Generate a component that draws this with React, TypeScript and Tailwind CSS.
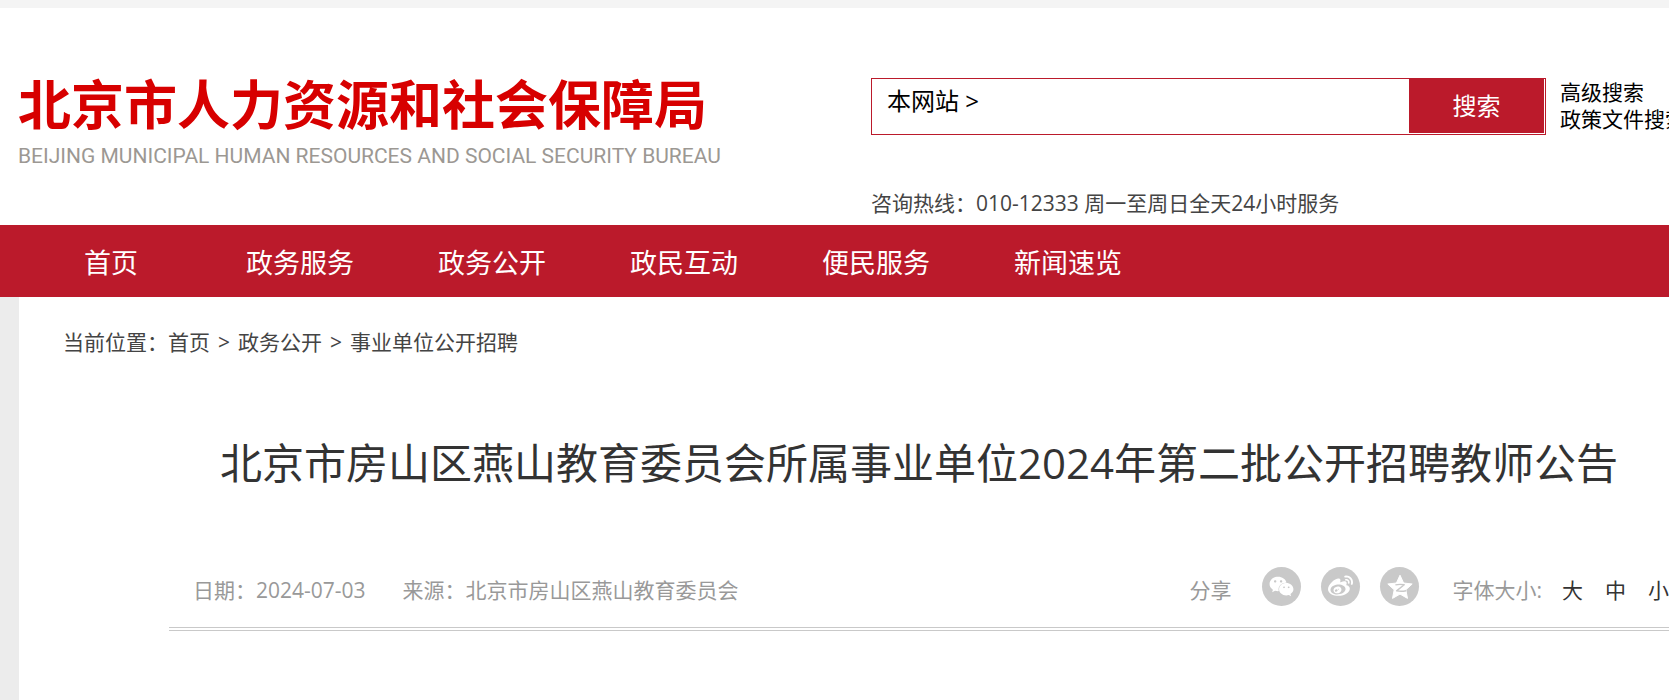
import { FaWeibo, FaWeixin } from "react-icons/fa";

const NAV = ["政务服务", "政务公开", "政民互动", "便民服务", "新闻速览"];

function QzoneIcon() {
  return (
    <svg viewBox="0 0 28 28" className="size-7" aria-hidden>
      <path
        fill="#fff"
        stroke="#fff"
        strokeWidth="1"
        strokeLinejoin="round"
        d="M14 2.2l3.6 7.8 8.6 1-6.4 5.8 1.7 8.6L14 21.1l-7.5 4.3 1.7-8.6L1.8 11l8.6-1z"
      />
      <path
        fill="none"
        stroke="#c9c9c9"
        strokeWidth="1.4"
        strokeLinejoin="round"
        d="M9.4 11.9c3-.7 6-.7 8.8-.1l-7.6 6.1c3.6.6 6.6.5 9.4-.2"
      />
    </svg>
  );
}

function Header() {
  return (
    <header className="flex pt-[70px]">
      <a href="#" className="w-[871px] shrink-0 whitespace-nowrap pl-[18px]">
        <span className="block text-[53px] leading-[54px] font-bold text-[#d70000]">
          北京市人力资源和社会保障局
        </span>
        <span className="mt-3 block font-[Roboto,sans-serif] text-[21px] leading-6 text-[#9c9893]">
          BEIJING MUNICIPAL HUMAN RESOURCES AND SOCIAL SECURITY BUREAU
        </span>
      </a>

      <div className="min-w-0 flex-1">
        <div className="flex">
          <form
            className="flex h-[57px] min-w-0 flex-1 border border-[#bb1a2b] pr-px pb-px"
            onSubmit={(e) => e.preventDefault()}
          >
            <button type="button" className="self-start pl-[15px] pt-1 text-2xl leading-9 text-black">
              本网站 &gt;
            </button>
            <input
              type="text"
              aria-label="搜索内容"
              className="min-w-0 flex-1 px-3 text-2xl outline-none"
            />
            <button type="submit" className="w-[135px] bg-[#bb1a2b] text-2xl text-white">
              搜索
            </button>
          </form>
          <div className="w-[123px] shrink-0 overflow-hidden whitespace-nowrap pl-[14px] pt-px text-[21px] leading-[27px] text-black">
            <a href="#" className="block">高级搜索</a>
            <a href="#" className="block">政策文件搜索</a>
          </div>
        </div>
        <p className="mt-[54px] pb-[7px] text-[21px] leading-[29px] text-[#444]">
          咨询热线：010-12333 周一至周日全天24小时服务
        </p>
      </div>
    </header>
  );
}

function MainNav() {
  return (
    <nav className="flex h-[72px] items-center overflow-hidden whitespace-nowrap bg-[#bb1a2b] pt-[3px] text-[27px] leading-9 text-white">
      <a href="#" className="w-[222px] shrink-0 text-center">首页</a>
      <ul className="flex pl-1">
        {NAV.map((name) => (
          <li key={name} className="w-48 shrink-0 pl-5">
            <a href="#">{name}</a>
          </li>
        ))}
      </ul>
    </nav>
  );
}

function Breadcrumb() {
  return (
    <div className="flex whitespace-nowrap pl-11 text-[21px] leading-[30px] text-[#444]">
      <span>当前位置：</span>
      <a href="#">首页</a>
      <span className="w-7 text-center">&gt;</span>
      <a href="#">政务公开</a>
      <span className="w-7 text-center">&gt;</span>
      <a href="#">事业单位公开招聘</a>
    </div>
  );
}

function ShareButtons() {
  const circle = "flex size-[39px] items-center justify-center rounded-full bg-[#c9c9c9] text-white";
  return (
    <div className="flex gap-5">
      <button type="button" aria-label="微信" className={circle}>
        <FaWeixin className="size-[25px]" />
      </button>
      <button type="button" aria-label="微博" className={circle}>
        <FaWeibo className="size-[25px]" />
      </button>
      <button type="button" aria-label="QQ空间" className={circle}>
        <QzoneIcon />
      </button>
    </div>
  );
}

export default function App() {
  return (
    <div className="flex min-h-screen flex-col overflow-hidden border-t-8 border-[#f4f4f4] bg-white font-['Open_Sans','Noto_Sans_CJK_SC',sans-serif]">
      <Header />
      <MainNav />

      <main className="flex-1 border-l-[19px] border-[#ececec] pt-[30px]">
        <Breadcrumb />

        <article className="pl-[150px]">
          <h1 className="mt-[76px] whitespace-nowrap text-center text-[42px] leading-[60px] text-[#333]">
            北京市房山区燕山教育委员会所属事业单位2024年第二批公开招聘教师公告
          </h1>

          <div className="mt-[74px] flex items-start whitespace-nowrap border-b-4 border-double border-[#c9c9c9] pb-[13px] pl-6 text-[21px] leading-[47px] text-[#999]">
            <span>日期：2024-07-03</span>
            <span className="ml-[37px]">来源：北京市房山区燕山教育委员会</span>
            <span className="mr-[31px] ml-auto">分享</span>
            <ShareButtons />
            <span className="ml-[33px]">字体大小:</span>
            <div className="ml-5 flex gap-[22px] text-[#333]">
              <button type="button">大</button>
              <button type="button">中</button>
              <button type="button">小</button>
            </div>
          </div>
        </article>
      </main>
    </div>
  );
}
